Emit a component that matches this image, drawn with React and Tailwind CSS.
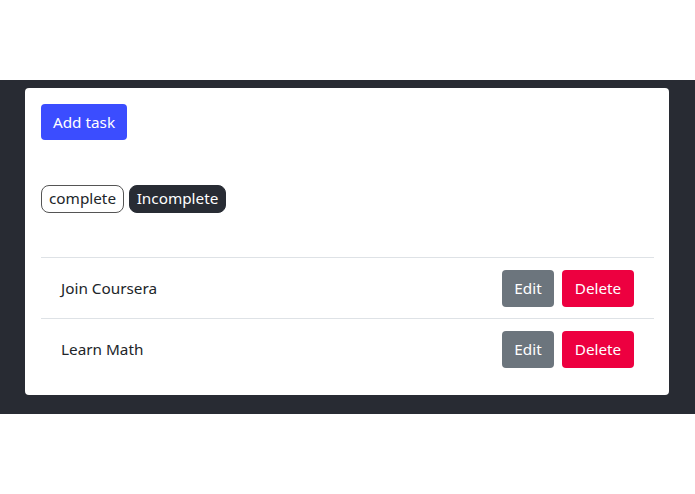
import React, { useState } from "react";

const initialTasks = [
  { id: 1, title: "Join Coursera" },
  { id: 2, title: "Learn Math" },
];

export default function App() {
  const [tasks, setTasks] = useState(initialTasks);
  const [filter, setFilter] = useState("incomplete");

  const removeTask = (id) => setTasks(tasks.filter((t) => t.id !== id));

  return (
    <div className="min-h-[494px] bg-white pt-20 font-['Noto_Sans',sans-serif] text-[15.3px] text-[#212529]">
      <div className="bg-[#282b33] pt-2 pb-[19px] pl-[25px] pr-[26px]">
        <div className="rounded bg-white p-4 pr-[15px]">
          <button className="h-9 w-[86px] rounded bg-[#3b4dff] text-white">
            Add task
          </button>

          {/* filters */}
          <div className="mt-[45px] flex gap-[5px]">
            <button
              onClick={() => setFilter("complete")}
              className={
                filter === "complete"
                  ? "h-7 w-[83px] rounded-lg border border-[#282c34] bg-[#282c34] leading-none text-white"
                  : "h-7 w-[83px] rounded-lg border border-[#555] bg-white leading-none text-[#212529]"
              }
            >
              complete
            </button>
            <button
              onClick={() => setFilter("incomplete")}
              className={
                filter === "incomplete"
                  ? "h-7 w-[97px] rounded-lg border border-[#282c34] bg-[#282c34] leading-none text-white"
                  : "h-7 w-[97px] rounded-lg border border-[#555] bg-white leading-none text-[#212529]"
              }
            >
              Incomplete
            </button>
          </div>

          {/* task list */}
          <ul className="mt-11">
            {tasks.map((task) => (
              <li
                key={task.id}
                className="flex h-[61px] items-center justify-between border-t border-[#dee2e6] px-5"
              >
                <span>{task.title}</span>
                <div className="flex gap-2">
                  <button className="h-[37px] w-[52px] rounded bg-[#6c757d] text-white">
                    Edit
                  </button>
                  <button
                    onClick={() => removeTask(task.id)}
                    className="h-[37px] w-[72px] rounded bg-[#ed0040] text-white"
                  >
                    Delete
                  </button>
                </div>
              </li>
            ))}
          </ul>
        </div>
      </div>
    </div>
  );
}
